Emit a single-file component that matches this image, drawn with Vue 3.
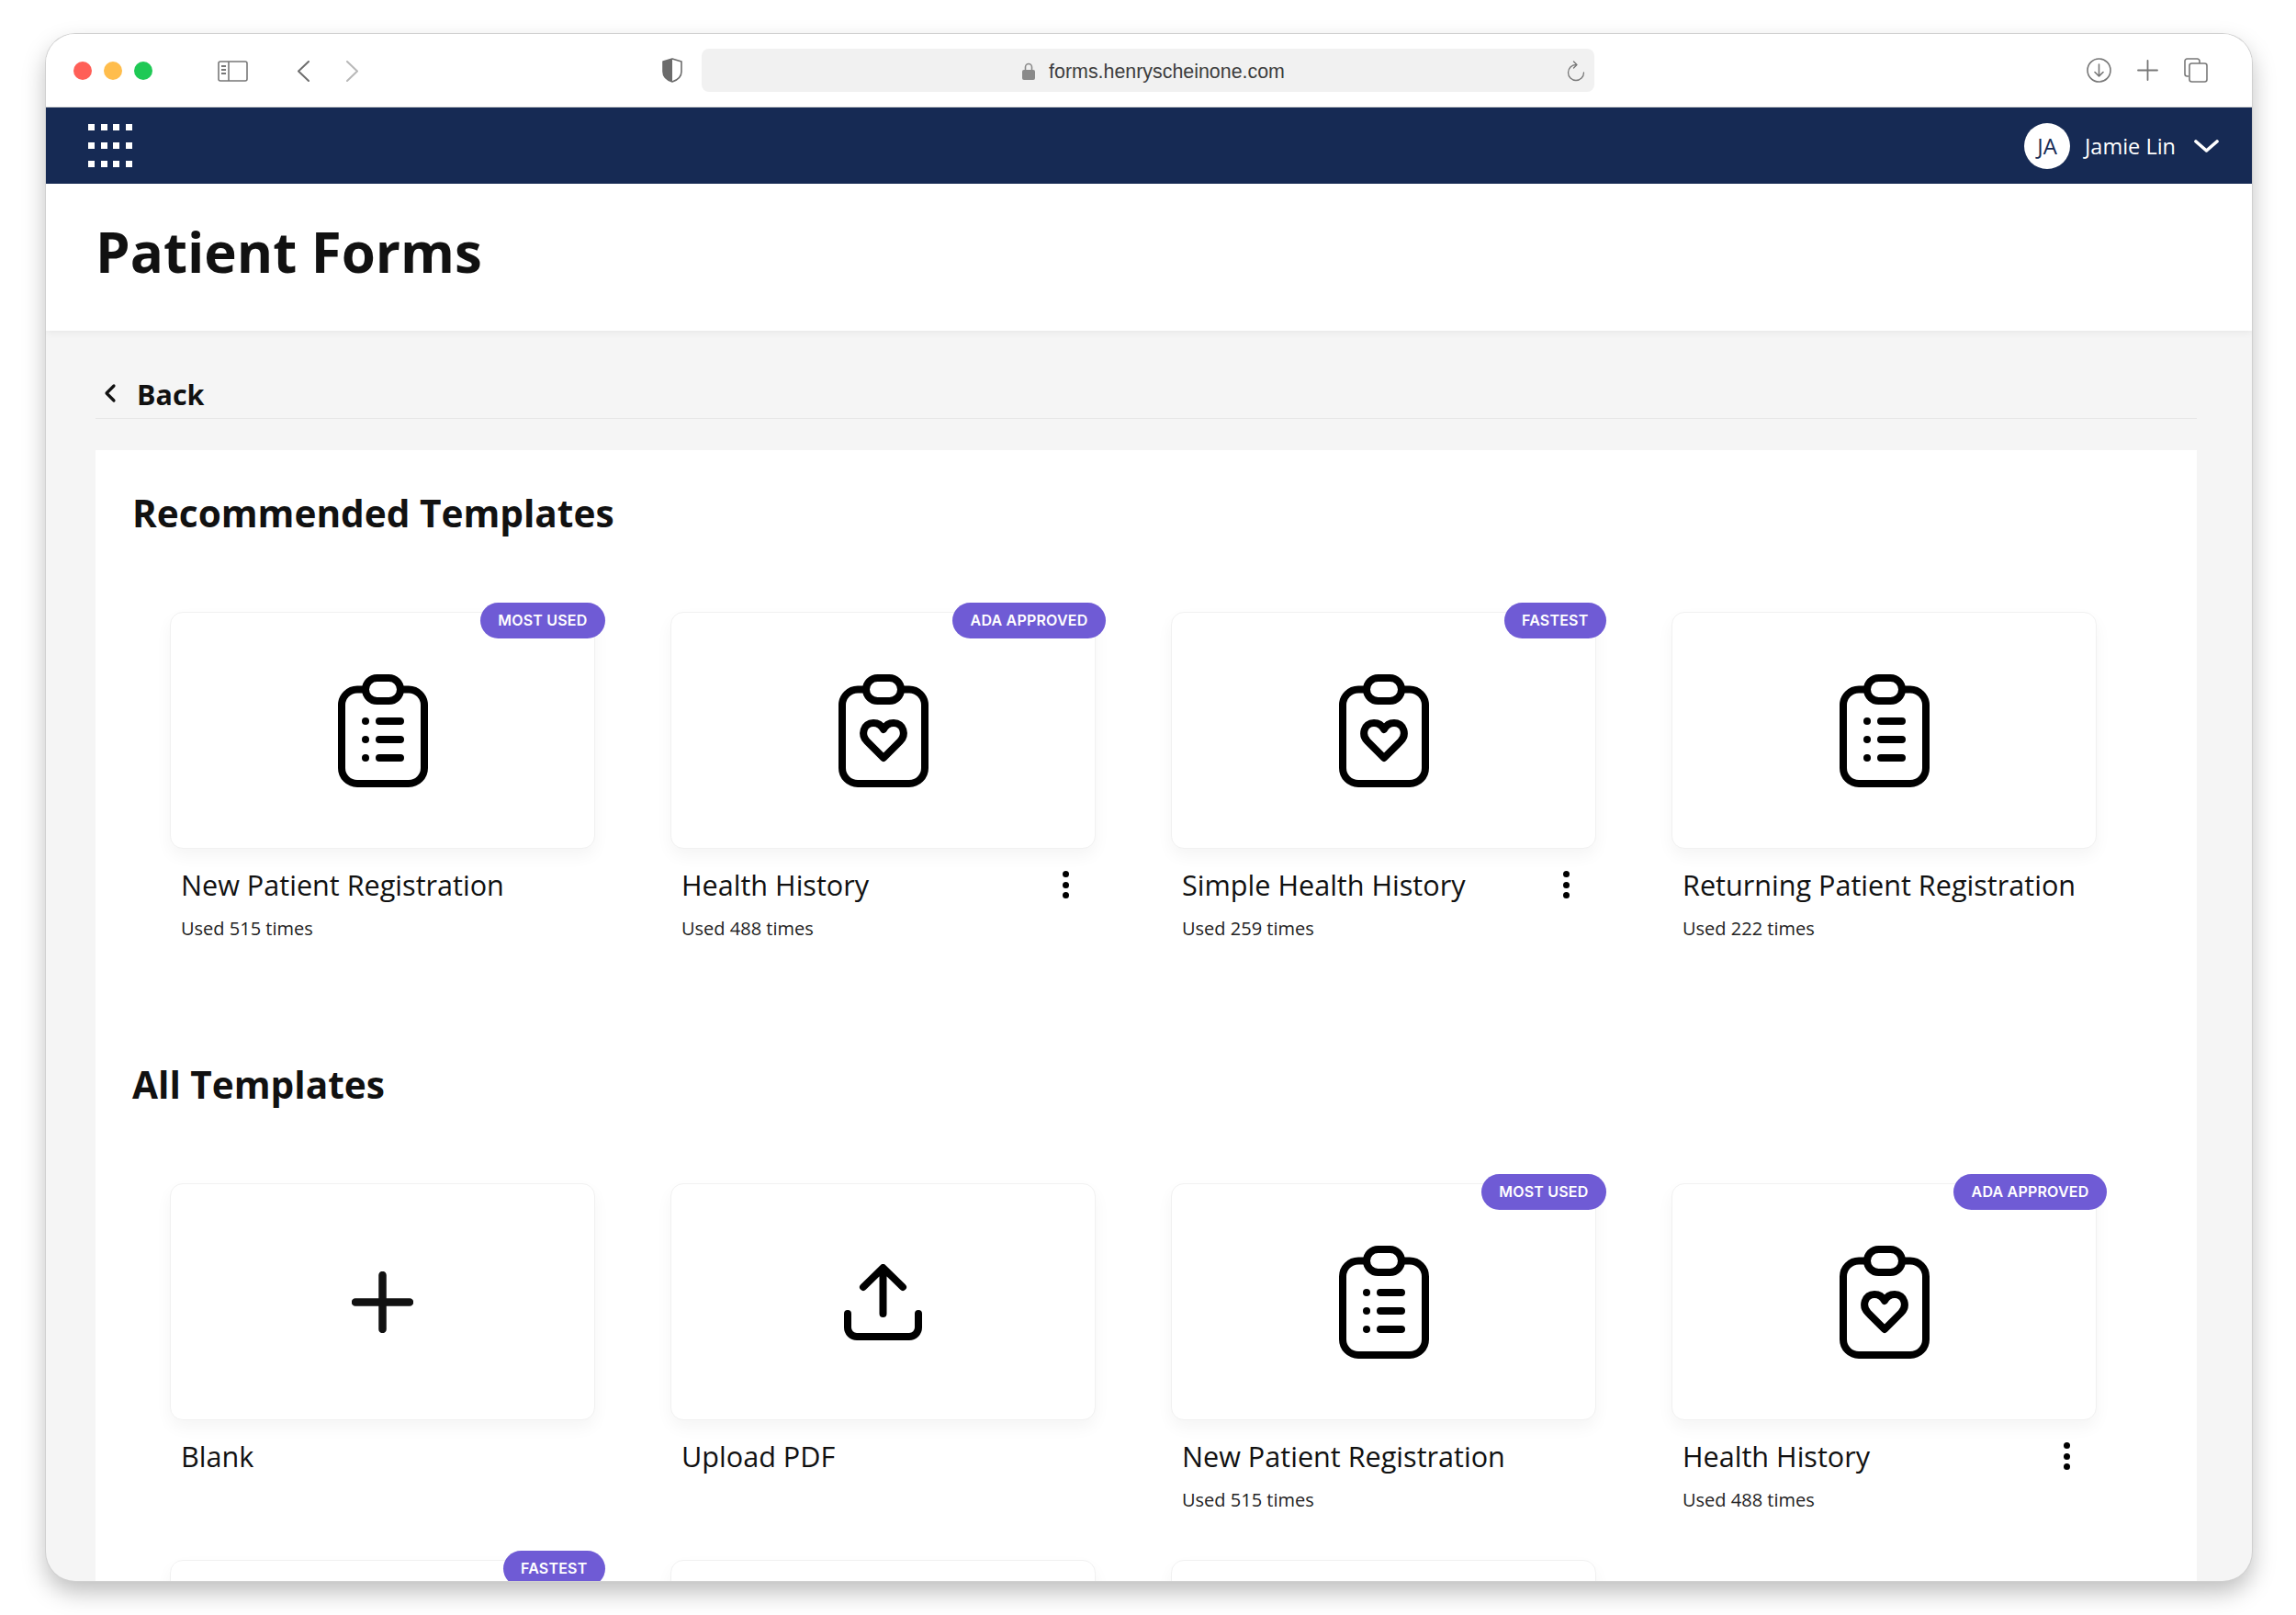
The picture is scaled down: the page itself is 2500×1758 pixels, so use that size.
<script setup>
const recommended = [
  { name: 'New Patient Registration', used: 515, icon: 'list', badge: 'MOST USED' },
  { name: 'Health History', used: 488, icon: 'heart', badge: 'ADA APPROVED', menu: true },
  { name: 'Simple Health History', used: 259, icon: 'heart', badge: 'FASTEST', menu: true },
  { name: 'Returning Patient Registration', used: 222, icon: 'list' }
]

// last row only shows the top edge of its cards above the window fold
const all = [
  { name: 'Blank', icon: 'plus' },
  { name: 'Upload PDF', icon: 'upload' },
  { name: 'New Patient Registration', used: 515, icon: 'list', badge: 'MOST USED' },
  { name: 'Health History', used: 488, icon: 'heart', badge: 'ADA APPROVED', menu: true },
  { badge: 'FASTEST' },
  {},
  {}
]

const sections = [
  { title: 'Recommended Templates', items: recommended },
  { title: 'All Templates', items: all }
]
</script>

<template>
  <div class="page">
    <div class="window">
      <div class="toolbar">
        <div class="lights">
          <span class="light red"></span>
          <span class="light amber"></span>
          <span class="light green"></span>
        </div>
        <svg class="sidebar-icon" width="33" height="23" viewBox="0 0 33 23" fill="none" stroke="#777" stroke-width="1.6">
          <rect x="1" y="1" width="31" height="21" rx="2" />
          <path d="M12 1v21" />
          <path d="M4 6h5M4 10h5M4 14h5" stroke-width="2" />
        </svg>
        <svg class="nav-back" width="14" height="23" viewBox="0 0 14 23" fill="none" stroke="#6e6e6e" stroke-width="2" stroke-linecap="round" stroke-linejoin="round">
          <path d="M13 1 2 11.5 13 22" />
        </svg>
        <svg class="nav-forward" width="14" height="23" viewBox="0 0 14 23" fill="none" stroke="#b8b8b8" stroke-width="2" stroke-linecap="round" stroke-linejoin="round">
          <path d="M1 1l11 10.500L1 22" />
        </svg>
        <svg class="shield" width="22" height="27" viewBox="0 0 22 27">
          <path d="M11 1 21 4v11c0 5-4 9-10 11C5 24 1 20 1 15V4z" fill="#fff" stroke="#6b6b6b" stroke-width="1.6" stroke-linejoin="round" />
          <path d="M11 1 1 4v11c0 5 4 9 10 11z" fill="#6b6b6b" />
        </svg>
        <div class="url-bar">
          <svg class="lock" width="14" height="19" viewBox="0 0 14 19" fill="none">
            <path d="M3.500 9V5a3.500 3.500 0 0 1 7 0v4" stroke="#8a8a8a" stroke-width="1.600" />
            <rect y="8" width="14" height="11" rx="2" fill="#8a8a8a" />
          </svg>
          <span class="url">forms.henryscheinone.com</span>
          <svg class="reload" width="21" height="23" viewBox="0 0 21 23" fill="none" stroke="#777" stroke-width="1.300" stroke-linecap="round" stroke-linejoin="round">
            <path d="M11 4.500a8.500 8.500 0 1 0 8.500 8.500" />
            <path d="M8.500 1 12 4.500 8.500 8" />
          </svg>
        </div>
        <div class="tools">
          <svg width="27" height="27" viewBox="0 0 27 27" fill="none" stroke="#777" stroke-width="1.600" stroke-linecap="round" stroke-linejoin="round">
            <circle cx="13.500" cy="13.500" r="12.500" />
            <path d="M13.500 7v12.500M9 15.500l4.500 4.500 4.500-4.500" />
          </svg>
          <svg width="23" height="23" viewBox="0 0 23 23" fill="none" stroke="#777" stroke-width="1.800" stroke-linecap="round">
            <path d="M11.500 1v21M1 11.500h21" />
          </svg>
          <svg width="26" height="27" viewBox="0 0 26 27" fill="none" stroke="#777" stroke-width="1.600">
            <path d="M5 20H3.500A2.500 2.500 0 0 1 1 17.500v-14A2.500 2.500 0 0 1 3.500 1h11A2.500 2.500 0 0 1 17 3.500V6" />
            <rect x="6" y="6" width="19" height="20" rx="2.500" />
          </svg>
        </div>
      </div>

      <div class="navbar">
        <div class="app-grid">
          <span v-for="n in 12" :key="n"></span>
        </div>
        <div class="user">
          <span class="avatar">JA</span>
          <span class="user-name">Jamie Lin</span>
          <svg width="27" height="14" viewBox="0 0 27 14" fill="none" stroke="#fff" stroke-width="3.600" stroke-linecap="round" stroke-linejoin="round">
            <path d="M2 2l11.500 10L25 2" />
          </svg>
        </div>
      </div>

      <header class="page-header">
        <h1>Patient Forms</h1>
      </header>

      <main class="content">
        <div class="back-row">
          <svg width="14" height="22" viewBox="0 0 14 22" fill="none" stroke="#111" stroke-width="3.200" stroke-linecap="round" stroke-linejoin="round">
            <path d="M11 3 3 11l8 8" />
          </svg>
          <span>Back</span>
        </div>

        <div class="panel">
          <section v-for="section in sections" :key="section.title" class="section">
            <h2>{{ section.title }}</h2>
            <div class="grid">
              <div v-for="(item, i) in section.items" :key="i" class="template">
                <div class="card">
                  <span v-if="item.badge" class="badge">{{ item.badge }}</span>

                  <svg v-if="item.icon === 'list'" width="98" height="123" viewBox="0 0 98 123" fill="none" stroke="#000" stroke-width="8" stroke-linecap="round">
                    <rect x="4" y="16.500" width="90" height="102.500" rx="17" />
                    <rect x="30" y="4" width="38" height="25" rx="12.500" fill="#fff" />
                    <path d="M45 51h23M45 71h23M45 91h23" />
                    <circle cx="30" cy="51" r="4" fill="#000" stroke="none" />
                    <circle cx="30" cy="71" r="4" fill="#000" stroke="none" />
                    <circle cx="30" cy="91" r="4" fill="#000" stroke="none" />
                  </svg>

                  <svg v-else-if="item.icon === 'heart'" width="98" height="123" viewBox="0 0 98 123" fill="none" stroke="#000" stroke-width="8" stroke-linejoin="round">
                    <rect x="4" y="16.500" width="90" height="102.500" rx="17" />
                    <rect x="30" y="4" width="38" height="25" rx="12.500" fill="#fff" />
                    <path d="M49 91 31 73C24 66 27 53 38 53c5 0 9 3 11 7 2-4 6-7 11-7 11 0 14 13 7 20z" />
                  </svg>

                  <svg v-else-if="item.icon === 'plus'" width="67" height="67" viewBox="0 0 67 67" fill="none" stroke="#111" stroke-width="8.500" stroke-linecap="round">
                    <path d="M33.500 4v59M4 33.500h59" />
                  </svg>

                  <svg v-else-if="item.icon === 'upload'" width="85" height="83" viewBox="0 0 85 83" fill="none" stroke="#000" stroke-width="8" stroke-linecap="round" stroke-linejoin="round">
                    <path d="M4 54v15a10 10 0 0 0 10 10h57a10 10 0 0 0 10-10V54" />
                    <path d="M42.500 54V5M21 25 42.500 4 64 25" />
                  </svg>
                </div>

                <div v-if="item.name" class="meta">
                  <div class="name-row">
                    <span class="name">{{ item.name }}</span>
                    <span v-if="item.menu" class="kebab"><i></i><i></i><i></i></span>
                  </div>
                  <div v-if="item.used" class="used">Used {{ item.used }} times</div>
                </div>
              </div>
            </div>
          </section>
        </div>
      </main>
    </div>
  </div>
</template>

<style>
html, body {
  margin: 0;
  background: #fff;
}
</style>

<style scoped>
.page {
  width: 2500px;
  height: 1758px;
  box-sizing: border-box;
  padding: 37px 48px 37px 50px;
  background: #fff;
  overflow: hidden;
}

.window {
  height: 100%;
  border-radius: 32px;
  overflow: hidden;
  display: flex;
  flex-direction: column;
  background: #f5f5f5;
  box-shadow: 0 0 0 1px #d0d0d0, 0 12px 26px rgba(0, 0, 0, 0.26);
  font-family: "Open Sans", "Noto Sans", sans-serif;
  color: #111;
}

.toolbar {
  flex: none;
  height: 79px;
  border-bottom: 1px solid #dcdcdc;
  background: #fff;
  display: flex;
  align-items: center;
  padding: 0 48px 0 30px;
}

.lights {
  display: flex;
  gap: 13px;
  margin-right: 71px;
  margin-top: 1px;
}

.light {
  width: 20px;
  height: 20px;
  border-radius: 50%;
}
.red { background: #ff5f57; }
.amber { background: #ffbd4c; }
.green { background: #1fc955; }

.sidebar-icon { margin: 1px 53px 0 0; }
.nav-back { margin: 1px 40px 0 0; }
.nav-forward { margin: 1px 330px 0 0; }
.shield { margin: -1px 21px 0 0; }

.url-bar {
  width: 972px;
  height: 47px;
  border-radius: 8px;
  background: #f1f1f1;
  display: flex;
  align-items: center;
  justify-content: center;
  gap: 15px;
  padding-left: 12px;
  box-sizing: border-box;
  position: relative;
}

.lock { margin-top: 2px; }

.url {
  font-family: "Liberation Sans", Arial, sans-serif;
  font-size: 21.400px;
  color: #3d3d3d;
  margin-top: 3px;
}

.reload {
  position: absolute;
  right: 10px;
  top: 13px;
}

.tools {
  margin-left: auto;
  display: flex;
  align-items: center;
  gap: 28px;
}

.navbar {
  flex: none;
  height: 83px;
  background: #162a54;
  display: flex;
  align-items: center;
  justify-content: space-between;
  padding: 0 36px 0 46px;
}

.app-grid {
  display: grid;
  grid-template-columns: repeat(4, 7px);
  grid-auto-rows: 7px;
  column-gap: 6.500px;
  row-gap: 13px;
}

.app-grid span {
  background: #fff;
}

.user {
  display: flex;
  align-items: center;
}

.avatar {
  width: 50px;
  height: 50px;
  border-radius: 50%;
  background: #fff;
  color: #162a54;
  font-size: 24px;
  font-weight: 400;
  display: flex;
  align-items: center;
  justify-content: center;
  margin-right: 16px;
}

.user-name {
  color: #fff;
  font-size: 23.500px;
  font-weight: 400;
  margin-right: 20px;
}

.page-header {
  flex: none;
  height: 160px;
  background: #fff;
  box-shadow: 0 2px 8px rgba(0, 0, 0, 0.06);
  display: flex;
  align-items: center;
  padding: 0 0 12px 54px;
  box-sizing: border-box;
  position: relative;
}

h1 {
  margin: 0;
  font-size: 60px;
  font-weight: 700;
  line-height: 80px;
  color: #111;
}

.content {
  flex: 1;
  min-height: 0;
  padding: 0 60px 0 54px;
}

.back-row {
  height: 96px;
  box-sizing: border-box;
  border-bottom: 1px solid #e6e6e6;
  padding: 46px 0 0 9px;
  display: flex;
  align-items: flex-start;
  gap: 22px;
  font-size: 30.500px;
  font-weight: 700;
  line-height: 46px;
}

.back-row svg {
  margin-top: 11px;
}

.panel {
  margin-top: 34px;
  padding: 41px 0 0 40px;
  background: #fff;
  height: 1300px;
}

.section {
  margin-bottom: 77px;
}

h2 {
  margin: 0 0 79px;
  font-size: 40.600px;
  font-weight: 700;
  line-height: 56px;
  color: #111;
}

.grid {
  display: grid;
  grid-template-columns: repeat(4, 463px);
  column-gap: 82px;
  grid-auto-rows: 410px;
  padding-left: 41px;
}

.card {
  height: 258px;
  box-sizing: border-box;
  border: 1px solid #f1f1f1;
  border-radius: 14px;
  background: #fff;
  box-shadow: 0 8px 18px rgba(0, 0, 0, 0.045);
  display: flex;
  align-items: center;
  justify-content: center;
  position: relative;
}

.badge {
  position: absolute;
  top: -11px;
  right: -12px;
  height: 39px;
  padding: 0 19.500px;
  border-radius: 20px;
  background: #6f5bd5;
  color: #fff;
  font-family: Inter, "Noto Sans", sans-serif;
  font-size: 16px;
  font-weight: 600;
  letter-spacing: 0.2px;
  line-height: 39px;
  white-space: nowrap;
}

.meta {
  padding: 17px 0 0 12px;
}

.name-row {
  display: flex;
  align-items: center;
  justify-content: space-between;
  height: 44px;
  padding-right: 29px;
}

.name {
  font-size: 30.600px;
  line-height: 44px;
  color: #111;
  white-space: nowrap;
}

.kebab {
  display: flex;
  flex-direction: column;
  gap: 4.600px;
}

.kebab i {
  display: block;
  width: 7px;
  height: 7px;
  border-radius: 50%;
  background: #000;
}

.used {
  margin-top: 11px;
  font-size: 20px;
  line-height: 30px;
  color: #222;
}
</style>
